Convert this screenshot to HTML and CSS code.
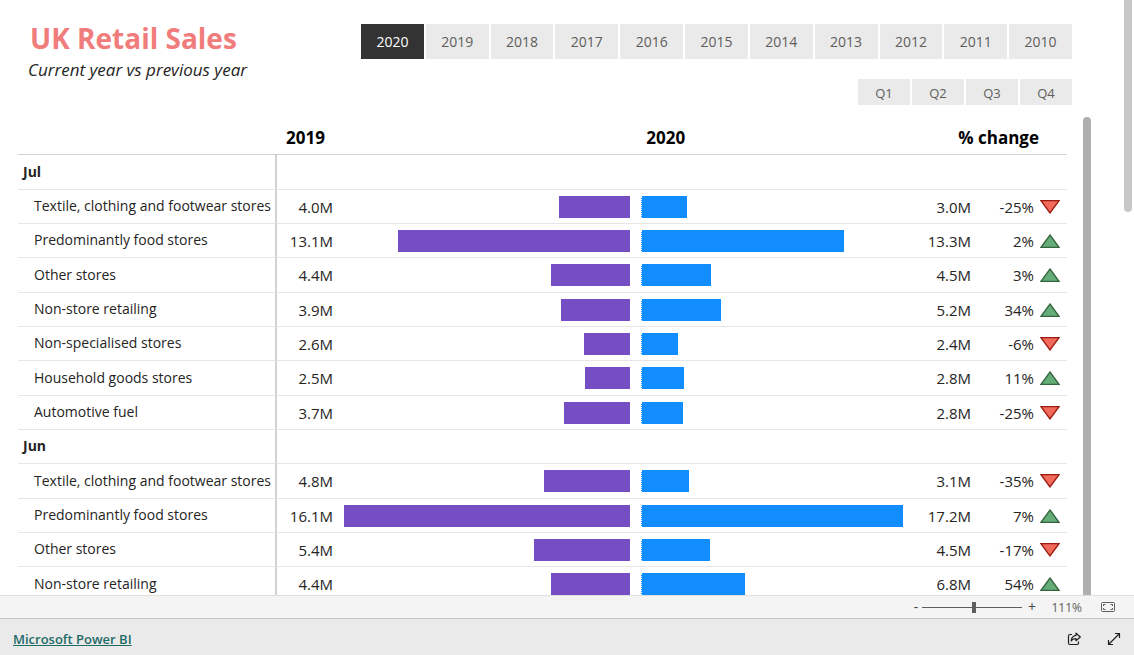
FILE: index.html
```html
<!DOCTYPE html>
<html lang="en">
<head>
<meta charset="utf-8">
<title>UK Retail Sales</title>
<link rel="stylesheet" href="styles.css">
</head>
<body>
<svg class="defs" aria-hidden="true">
  <symbol id="down" viewBox="0 0 20 14"><path d="M1 .7H19L10 13Z" fill="#f16a5c" stroke="#9c1c10" stroke-width="1.3"/></symbol>
  <symbol id="up" viewBox="0 0 20 14"><path d="M10 1L19 13.3H1Z" fill="#64ac78" stroke="#35653f" stroke-width="1.3"/></symbol>
</svg>
<main class="report">
  <header class="report-head">
    <div class="titles">
      <h1 class="title">UK Retail Sales</h1>
      <p class="subtitle">Current year vs previous year</p>
    </div>
    <div class="slicers">
      <div class="slicer years">
        <button class="tile selected" type="button">2020</button>
        <button class="tile" type="button">2019</button>
        <button class="tile" type="button">2018</button>
        <button class="tile" type="button">2017</button>
        <button class="tile" type="button">2016</button>
        <button class="tile" type="button">2015</button>
        <button class="tile" type="button">2014</button>
        <button class="tile" type="button">2013</button>
        <button class="tile" type="button">2012</button>
        <button class="tile" type="button">2011</button>
        <button class="tile" type="button">2010</button>
      </div>
      <div class="slicer quarters">
        <button class="tile" type="button">Q1</button>
        <button class="tile" type="button">Q2</button>
        <button class="tile" type="button">Q3</button>
        <button class="tile" type="button">Q4</button>
      </div>
    </div>
  </header>
  <section class="matrix">
    <table class="sales">
      <colgroup><col class="c-label"><col class="c-prev"><col><col class="c-bar"><col class="c-num"><col class="c-num"><col class="c-icon"></colgroup>
      <thead>
        <tr><td></td><th class="h-prev" colspan="2" scope="col">2019</th><th class="h-cur" scope="col">2020</th><th class="h-change" colspan="3" scope="col">% change</th></tr>
      </thead>
      <tbody>
        <tr><th class="month" scope="row">Jul</th><td colspan="6"></td></tr>
        <tr><th class="store" scope="row">Textile, clothing and footwear stores</th><td class="num prev">4.0M</td><td class="left"><div class="bar" style="width:24.5%"></div></td><td class="right"><div class="bar" style="width:17%"></div></td><td class="num">3.0M</td><td class="num">-25%</td><td class="kpi"><svg><use href="#down"/></svg></td></tr>
        <tr><th class="store" scope="row">Predominantly food stores</th><td class="num prev">13.1M</td><td class="left"><div class="bar" style="width:79.5%"></div></td><td class="right"><div class="bar" style="width:76%"></div></td><td class="num">13.3M</td><td class="num">2%</td><td class="kpi"><svg><use href="#up"/></svg></td></tr>
        <tr><th class="store" scope="row">Other stores</th><td class="num prev">4.4M</td><td class="left"><div class="bar" style="width:27%"></div></td><td class="right"><div class="bar" style="width:26.2%"></div></td><td class="num">4.5M</td><td class="num">3%</td><td class="kpi"><svg><use href="#up"/></svg></td></tr>
        <tr><th class="store" scope="row">Non-store retailing</th><td class="num prev">3.9M</td><td class="left"><div class="bar" style="width:23.6%"></div></td><td class="right"><div class="bar" style="width:30%"></div></td><td class="num">5.2M</td><td class="num">34%</td><td class="kpi"><svg><use href="#up"/></svg></td></tr>
        <tr><th class="store" scope="row">Non-specialised stores</th><td class="num prev">2.6M</td><td class="left"><div class="bar" style="width:15.8%"></div></td><td class="right"><div class="bar" style="width:13.7%"></div></td><td class="num">2.4M</td><td class="num">-6%</td><td class="kpi"><svg><use href="#down"/></svg></td></tr>
        <tr><th class="store" scope="row">Household goods stores</th><td class="num prev">2.5M</td><td class="left"><div class="bar" style="width:15.4%"></div></td><td class="right"><div class="bar" style="width:16.1%"></div></td><td class="num">2.8M</td><td class="num">11%</td><td class="kpi"><svg><use href="#up"/></svg></td></tr>
        <tr><th class="store" scope="row">Automotive fuel</th><td class="num prev">3.7M</td><td class="left"><div class="bar" style="width:22.6%"></div></td><td class="right"><div class="bar" style="width:15.7%"></div></td><td class="num">2.8M</td><td class="num">-25%</td><td class="kpi"><svg><use href="#down"/></svg></td></tr>
        <tr><th class="month" scope="row">Jun</th><td colspan="6"></td></tr>
        <tr><th class="store" scope="row">Textile, clothing and footwear stores</th><td class="num prev">4.8M</td><td class="left"><div class="bar" style="width:29.5%"></div></td><td class="right"><div class="bar" style="width:18%"></div></td><td class="num">3.1M</td><td class="num">-35%</td><td class="kpi"><svg><use href="#down"/></svg></td></tr>
        <tr><th class="store" scope="row">Predominantly food stores</th><td class="num prev">16.1M</td><td class="left"><div class="bar" style="width:97.9%"></div></td><td class="right"><div class="bar" style="width:98.1%"></div></td><td class="num">17.2M</td><td class="num">7%</td><td class="kpi"><svg><use href="#up"/></svg></td></tr>
        <tr><th class="store" scope="row">Other stores</th><td class="num prev">5.4M</td><td class="left"><div class="bar" style="width:32.9%"></div></td><td class="right"><div class="bar" style="width:25.8%"></div></td><td class="num">4.5M</td><td class="num">-17%</td><td class="kpi"><svg><use href="#down"/></svg></td></tr>
        <tr><th class="store" scope="row">Non-store retailing</th><td class="num prev">4.4M</td><td class="left"><div class="bar" style="width:27%"></div></td><td class="right"><div class="bar" style="width:39%"></div></td><td class="num">6.8M</td><td class="num">54%</td><td class="kpi"><svg><use href="#up"/></svg></td></tr>
      </tbody>
    </table>
    <div class="matrix-scroll"></div>
  </section>
  <div class="page-scroll"></div>
</main>
<div class="zoombar">
  <button class="step" type="button" aria-label="Zoom out">-</button>
  <input class="range" type="range" min="0" max="100" value="52" aria-label="Zoom">
  <button class="step plus" type="button" aria-label="Zoom in">+</button>
  <span class="level">111%</span>
  <button class="fit" type="button" aria-label="Fit to page">
    <svg width="14" height="10" viewBox="0 0 14 10" fill="none" stroke="#605e5c"><rect x=".5" y=".5" width="13" height="9" rx="1"/><path d="M2.500 4V2.500H4.500M9.500 2.500H11.500V4M11.500 6V7.500H9.500M4.500 7.500H2.500V6"/></svg>
  </button>
</div>
<footer class="footer">
  <a class="brand" href="#">Microsoft Power BI</a>
  <button class="icon" type="button" aria-label="Share">
    <svg width="14" height="14" viewBox="0 0 14 14" fill="none" stroke="#201f1e" stroke-width="1.2" stroke-linejoin="round"><path d="M5 2.500H3Q1.500 2.500 1.500 4V11Q1.500 12.500 3 12.500H10Q11.500 12.500 11.500 11V9.500"/><path d="M9 1.200L13.300 5L9 8.700V6.700Q5.800 6.500 4.200 9Q4.500 4 9 3.300Z"/></svg>
  </button>
  <button class="icon" type="button" aria-label="Full screen">
    <svg width="14" height="14" viewBox="0 0 14 14" fill="none" stroke="#201f1e" stroke-width="1.2"><path d="M1.500 12.500L12.500 1.500M8 1.500H12.500V6M1.500 8V12.500H6"/></svg>
  </button>
</footer>
</body>
</html>
```
FILE: styles.css
```css
* { box-sizing: border-box; }
body {
  margin: 0;
  height: 100vh;
  display: flex;
  flex-direction: column;
  font-family: "Open Sans", "Noto Sans", sans-serif;
  font-size: 14px;
  color: #252423;
  background: #fff;
}
button { font: inherit; border: 0; padding: 0; background: none; }
.defs { display: none; }

.report { flex: 1; min-height: 0; overflow: hidden; position: relative; }
.report-head {
  display: flex;
  justify-content: space-between;
  padding: 20px 62px 0 28px;
}
.title { margin: 0; padding-left: 2px; font-size: 28px; line-height: 36px; color: #f17c7c; }
.subtitle { margin: 0; font-size: 17px; line-height: 28px; font-style: italic; }
.slicers {
  width: 711px;
  padding-top: 4px;
  display: flex;
  flex-direction: column;
  align-items: flex-end;
  gap: 20px;
}
.slicer { display: flex; gap: 2px; }
.years { width: 100%; height: 35px; }
.quarters { width: 214px; height: 26px; font-size: 13px; }
.quarters .tile { padding-top: 2px; }
.tile { flex: 1; background: #eaeaea; color: #605e5c; }
.selected { background: #333; color: #fff; }

.matrix { display: flex; gap: 16px; padding: 12px 43px 0 18px; }
.matrix-scroll { width: 8px; border-radius: 4px 4px 0 0; background: #b0afad; }
.page-scroll {
  position: absolute;
  top: 0;
  right: 2px;
  width: 8px;
  height: 212px;
  border-radius: 0 0 4px 4px;
  background: #c8c8c8;
}
.sales { flex: 1; width: 100%; table-layout: fixed; border-collapse: separate; border-spacing: 0; }
.c-label { width: 259px; }
.c-prev { width: 61px; }
.c-bar { width: 26%; }
.c-num { width: 63px; }
.c-icon { width: 33px; }
.sales th, .sales td { padding: 0; border-bottom: 1px solid #e6e6e6; white-space: nowrap; }
.sales thead tr { height: 38px; }
.sales thead th, .sales thead td { border-bottom-color: #d2d2d2; }
.sales thead th { padding-top: 4px; font-size: 17px; color: #000; }
.sales .h-prev { padding-left: 9px; text-align: left; }
.sales .h-cur { padding-left: 11px; text-align: left; }
.sales .h-change { padding-right: 28px; text-align: right; }
.sales tbody tr { height: 34px; }
.sales tbody tr:nth-child(3n+1) { height: 35px; }
.sales .month, .sales .store { padding-bottom: 2px; text-align: left; border-right: 2px solid #d2d2d2; }
.sales .month { padding-left: 5px; }
.sales .store { padding-left: 16px; font-weight: 400; }
.sales .num { font-size: 15px; text-align: right; }
.sales .prev { padding-right: 5px; }
.sales .left { padding-right: 5px; }
.sales .right { padding-left: 6px; }
.bar { height: 22px; }
.left .bar { margin-left: auto; background: #744ec2; }
.right .bar { background: #118dff; border-left: 1px dotted #fff; }
.sales .kpi { padding-left: 6px; }
.kpi svg { display: block; width: 20px; height: 14px; }

.zoombar {
  display: flex;
  align-items: center;
  height: 23px;
  padding-right: 19px;
  justify-content: flex-end;
  border-top: 1px solid #e1dfdd;
  background: #f4f4f4;
  color: #605e5c;
  font-size: 12px;
}
.step { width: 12px; font-size: 14px; line-height: 20px; color: #484644; }
.plus { width: 20px; }
.range { width: 100px; height: 12px; margin: 0; appearance: none; background: transparent; }
.range::-webkit-slider-runnable-track { height: 1px; background: #605e5c; }
.range::-webkit-slider-thumb { appearance: none; width: 4px; height: 11px; margin-top: -5px; background: #605e5c; }
.level { width: 40px; text-align: right; }
.fit { margin-left: 19px; }
.fit svg, .icon svg { display: block; }
.footer {
  display: flex;
  align-items: center;
  gap: 26px;
  height: 37px;
  padding: 3px 13px 0;
  border-top: 1px solid #c8c6c4;
  background: #eaeaea;
}
.brand { margin-right: auto; font-size: 13px; font-weight: 600; color: #1f6b66; }
```
